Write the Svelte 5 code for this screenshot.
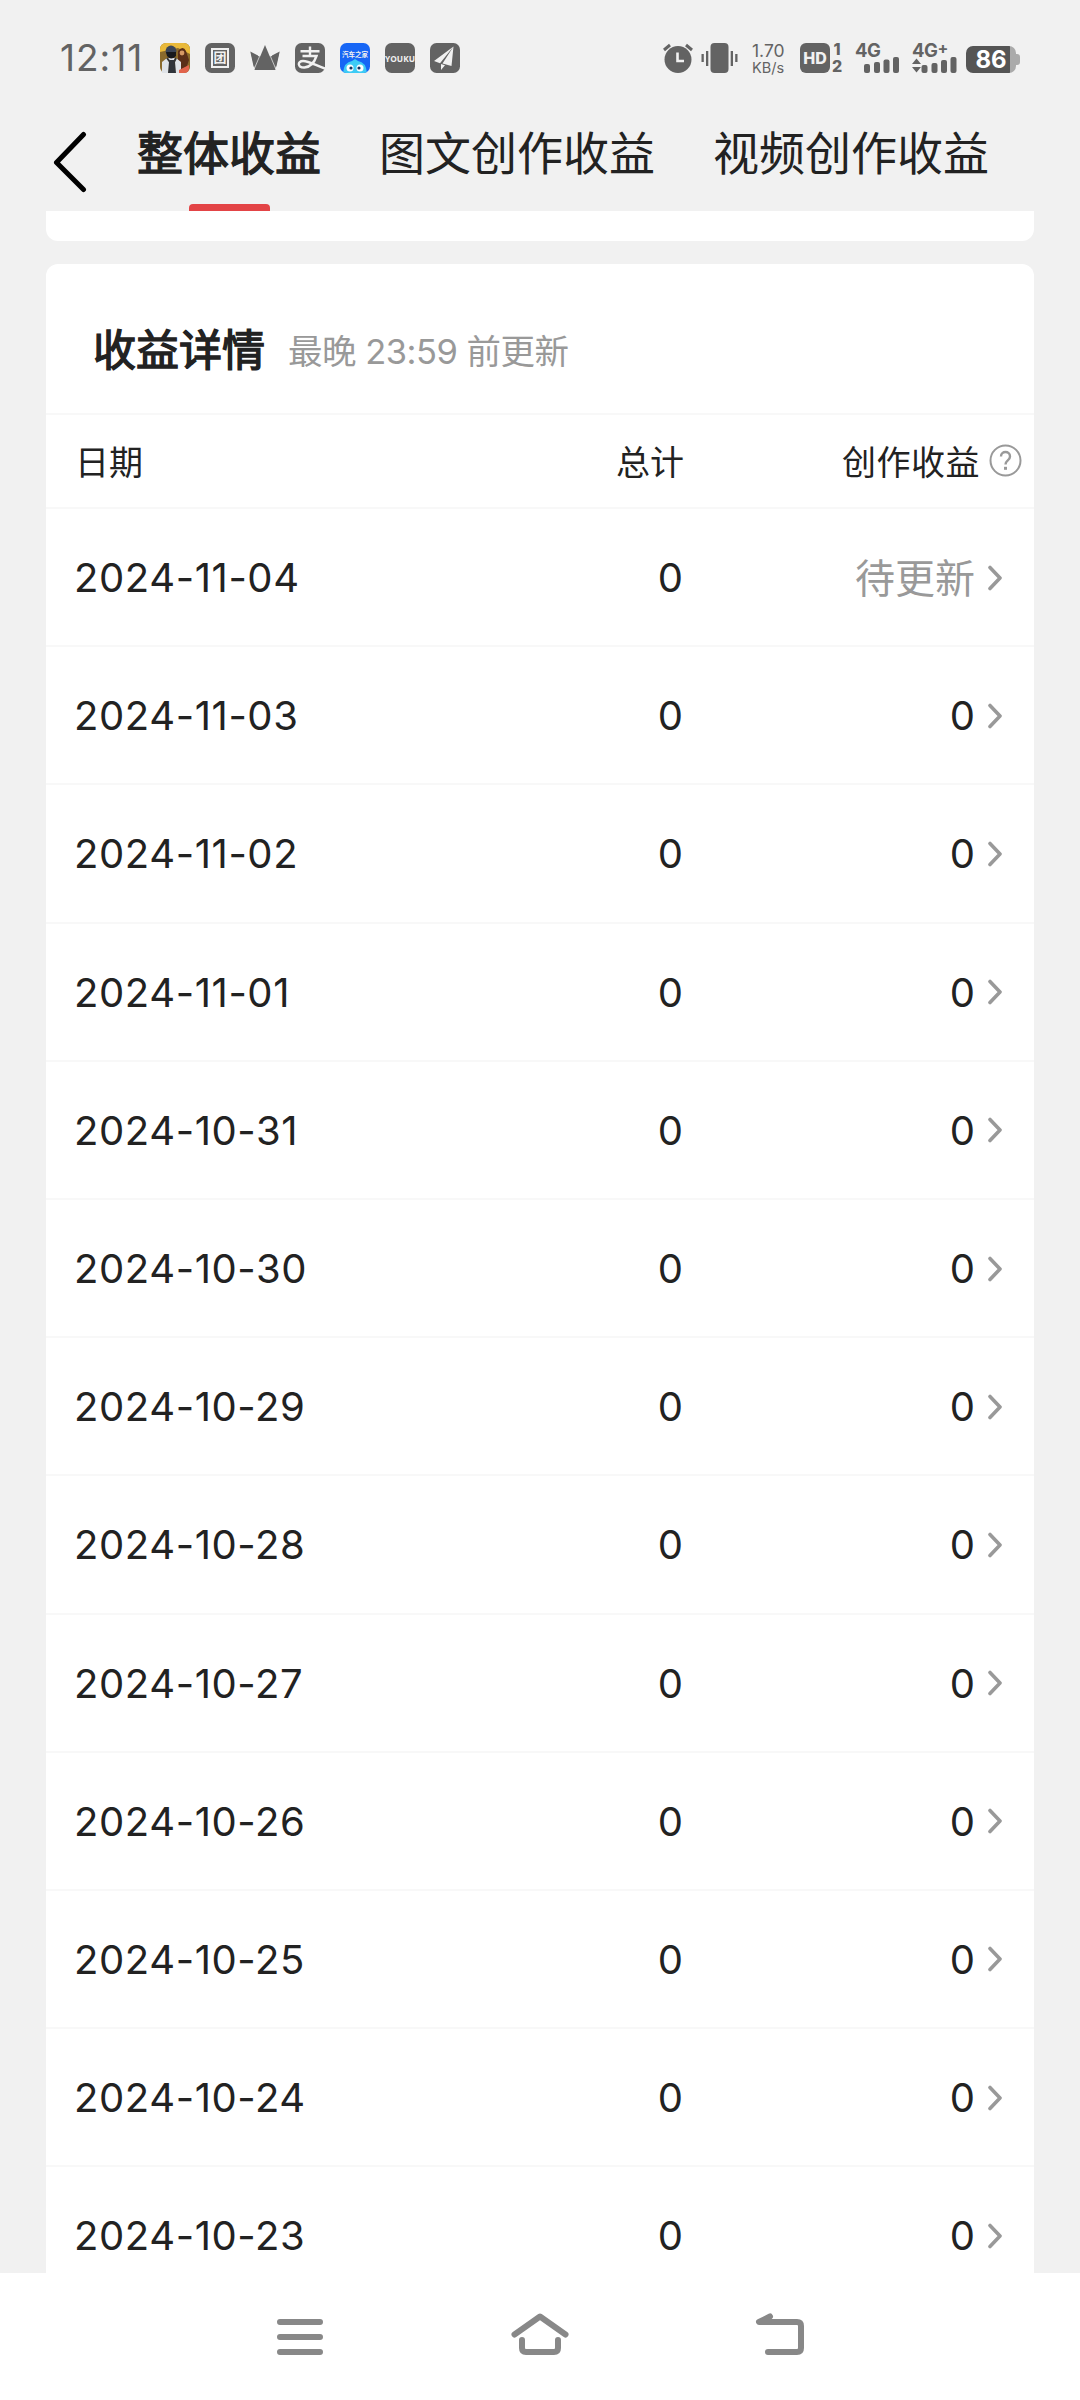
<script>
    let tabs = ["整体收益", "图文创作收益", "视频创作收益"]
    let active = 0

    let rows = [
        {date: "2024-11-04", total: "0", income: "待更新", pending: true},
        {date: "2024-11-03", total: "0", income: "0"},
        {date: "2024-11-02", total: "0", income: "0"},
        {date: "2024-11-01", total: "0", income: "0"},
        {date: "2024-10-31", total: "0", income: "0"},
        {date: "2024-10-30", total: "0", income: "0"},
        {date: "2024-10-29", total: "0", income: "0"},
        {date: "2024-10-28", total: "0", income: "0"},
        {date: "2024-10-27", total: "0", income: "0"},
        {date: "2024-10-26", total: "0", income: "0"},
        {date: "2024-10-25", total: "0", income: "0"},
        {date: "2024-10-24", total: "0", income: "0"},
        {date: "2024-10-23", total: "0", income: "0"}
    ]
</script>

<main class="screen">
    <div class="statusbar">
        <span class="clock">12:11</span>
        <div class="apps">
            <!-- game -->
            <svg width="30" height="30" viewBox="0 0 30 30">
                <rect width="30" height="30" rx="6" fill="#8a6a2c"/>
                <path d="M6 0h18a6 6 0 0 1 6 6v5L18 5 0 9V6a6 6 0 0 1 6-6z" fill="#e9b93a"/>
                <path d="M18 8q5-6 8 0l3 9-3 9h-8z" fill="#5b2f18"/>
                <circle cx="22" cy="10" r="2.4" fill="#d79a66"/>
                <path d="M2 30V19l5-4h9l5 4v11z" fill="#dfe3e8"/>
                <path d="M7 15l3 4-1 11M16 15l-2 4 1 11" stroke="#333" stroke-width="2" fill="none"/>
                <path d="M10 17h4l1 13H9z" fill="#30343b"/>
                <circle cx="11" cy="8" r="5.4" fill="#3b4557"/>
                <path d="M6 9h10v4q-5 5-9 0z" fill="#17191d"/>
                <path d="M19 27l10-5v3q0 5-5 5h-5z" fill="#e2644c"/>
            </svg>
            <span class="app"><span class="frame">团</span></span>
            <!-- crown -->
            <svg width="30" height="30" viewBox="0 0 30 30" fill="#636363">
                <path d="M15 2l10.500 25h-21z"/>
                <path d="M.3 8.500l7.700 4L3.700 24zM29.700 8.500l-7.700 4L26.300 24z"/>
                <path d="M1 10l4 17h3l3-13-3-1zM29 10l-4 17h-3l-3-13 3-1z"/>
                <path d="M9.500 13.500L4.200 26M20.500 13.500l5.300 12.500" stroke="#f1f1f1" stroke-width=".7"/>
            </svg>
            <!-- pay -->
            <svg width="30" height="30" viewBox="0 0 30 30">
                <rect width="30" height="30" rx="6.500" fill="#636363"/>
                <g fill="none" stroke="#f1f1f1" stroke-width="2.400">
                    <path d="M5.500 8.200h19M15 3.500v9.500M7.500 13h14c-2 6-6 11-12 11.500-7 .3-7.500-6.500-1.500-6.500 6 0 13 4.500 22 7.500"/>
                </g>
            </svg>
            <!-- car app -->
            <span class="app blue">
                <span class="blue-text">汽车之家</span>
                <svg width="30" height="14" viewBox="0 0 30 14">
                    <path d="M3 14Q4 3 12 2l3-2 3 2q8 1 9 12z" fill="#3ecbf5"/>
                    <circle cx="10" cy="9" r="3.500" fill="#fff"/>
                    <circle cx="20" cy="9" r="3.500" fill="#fff"/>
                    <circle cx="11" cy="9" r="1.600" fill="#12335e"/>
                    <circle cx="19" cy="9" r="1.600" fill="#12335e"/>
                </svg>
            </span>
            <span class="app youku">YOUKU</span>
            <!-- paper plane -->
            <svg width="30" height="30" viewBox="0 0 30 30">
                <rect width="30" height="30" rx="6.500" fill="#636363"/>
                <path d="M23.500 3.500L4 18l6 2.200zM23.500 3.500L12.500 20.500l9 2.500zM11 21v6l4-4.700z" fill="#f1f1f1"/>
            </svg>
        </div>
        <div class="system">
            <!-- alarm -->
            <svg class="alarm" width="30" height="30" viewBox="0 0 30 30">
                <circle cx="15" cy="16.500" r="13.500" fill="#636363"/>
                <path d="M1 7l6-5M29 7l-6-5" stroke="#636363" stroke-width="3"/>
                <path d="M14.500 9.500V18H21" stroke="#f1f1f1" stroke-width="2.600" fill="none"/>
            </svg>
            <!-- vibrate -->
            <svg class="vibrate" width="37" height="30" viewBox="0 0 37 30" fill="#636363">
                <rect x="9.500" width="18" height="30" rx="4"/>
                <rect x="5" y="8" width="2.300" height="15"/>
                <rect x=".5" y="11" width="2.300" height="8"/>
                <rect x="29.700" y="8" width="2.300" height="15"/>
                <rect x="34.200" y="11" width="2.300" height="8"/>
            </svg>
            <div class="speed"><span>1.70</span><span class="unit">KB/s</span></div>
            <span class="hd">HD</span>
            <div class="sims"><span>1</span><span>2</span></div>
            <div class="signal first">
                <span>4G</span>
                <svg width="36" height="16" viewBox="0 0 36 16" fill="#636363">
                    <rect x="0" y="7" width="6" height="9" rx="2"/>
                    <rect x="10" y="5" width="6" height="11" rx="2"/>
                    <rect x="19.500" y="2.500" width="6" height="13.500" rx="2"/>
                    <rect x="29" y="0" width="6" height="16" rx="2"/>
                </svg>
            </div>
            <div class="signal">
                <span>4G<sup>+</sup></span>
                <svg width="45" height="16" viewBox="0 0 45 16" fill="#636363">
                    <path d="M0 7l4.500-5.500L9 7zM0 10h9l-4.500 5.500z"/>
                    <rect x="9.500" y="8" width="6" height="8" rx="2"/>
                    <rect x="19.500" y="6" width="6" height="10" rx="2"/>
                    <rect x="29" y="3" width="6" height="13" rx="2"/>
                    <rect x="38.500" y="0" width="6" height="16" rx="2"/>
                </svg>
            </div>
            <div class="battery">86</div>
        </div>
    </div>

    <nav class="tabs">
        <svg class="back" width="34" height="62" viewBox="0 0 34 62">
            <path d="M30.500 3.500L3.500 31.500l27 27" fill="none" stroke="#000" stroke-width="5" stroke-linecap="round" stroke-linejoin="round"/>
        </svg>
        {#each tabs as tab, i}
            <button class="tab" class:active={i === active} on:click={() => active = i}>{tab}</button>
        {/each}
    </nav>

    <div class="content">
        <section class="card previous"></section>
        <section class="card">
            <header>
                <h2>收益详情</h2>
                <span class="hint">最晚 23:59 前更新</span>
            </header>
            <div class="row head">
                <span>日期</span>
                <span class="total">总计</span>
                <span class="income">
                    创作收益
                    <svg width="33" height="33" viewBox="0 0 33 33" fill="none" stroke="#999" stroke-width="2">
                        <circle cx="16.500" cy="16.500" r="15"/>
                        <path d="M12 12.500c0-6 9-6 9 0 0 4-4.500 3.800-4.500 8" stroke-width="2.400"/>
                        <path d="M16.500 22.800v3" stroke-width="3"/>
                    </svg>
                </span>
            </div>
            {#each rows as row}
                <div class="row">
                    <span class="date">{row.date}</span>
                    <span class="total">{row.total}</span>
                    <span class="income" class:pending={row.pending}>
                        <span>{row.income}</span>
                        <svg width="16" height="26" viewBox="0 0 16 26">
                            <path d="M3 2.500L13 13 3 23.500" fill="none" stroke="#999" stroke-width="3.600" stroke-linecap="round" stroke-linejoin="round"/>
                        </svg>
                    </span>
                </div>
            {/each}
        </section>
    </div>

    <footer class="navbar">
        <svg width="60" height="48" viewBox="0 0 60 48">
            <path d="M10 9h40M10 24h40M10 39h40"/>
        </svg>
        <svg width="60" height="48" viewBox="0 0 60 48">
            <path d="M4.500 21.500L30 3.500l25.500 18M12 27v8q0 4 4 4h28q4 0 4-4v-8"/>
        </svg>
        <svg width="60" height="48" viewBox="0 0 60 48">
            <path d="M20 3.500L9 9h38q4 0 4 4v22q0 4-4 4H18"/>
        </svg>
    </footer>
</main>

<style>
:global(body) {
    margin: 0;
    background: #f1f1f1;
}

.screen {
    display: flex;
    flex-direction: column;
    box-sizing: border-box;
    width: 1080px;
    height: 2400px;
    overflow: hidden;
    background: #f1f1f1;
    color: #222;
    font-family: Inter, "Noto Sans CJK SC", sans-serif;
}

.statusbar {
    display: flex;
    align-items: center;
    flex: none;
    height: 116px;
    padding: 0 61px 0 60px;
    color: #636363;
}

.statusbar svg {
    display: block;
}

.clock {
    width: 100px;
    font-size: 37px;
    line-height: 40px;
    letter-spacing: 1px;
}

.apps {
    display: flex;
    gap: 15px;
}

.app {
    display: flex;
    align-items: center;
    justify-content: center;
    width: 30px;
    height: 30px;
    border-radius: 6.5px;
    background: #636363;
    color: #f1f1f1;
    overflow: hidden;
}

.frame {
    width: 14px;
    height: 16px;
    border: 2px solid #f1f1f1;
    font-size: 13px;
    line-height: 15px;
    font-weight: bold;
    text-align: center;
}

.blue {
    flex-direction: column;
    justify-content: flex-end;
    background: #1766f5;
}

.blue-text {
    font-size: 6.5px;
    line-height: 8px;
    font-weight: bold;
    white-space: nowrap;
}

.youku {
    font-family: "Open Sans", sans-serif;
    font-size: 8.3px;
    font-weight: bold;
}

.system {
    display: flex;
    align-items: center;
    height: 30px;
    margin-left: auto;
}

.vibrate {
    margin-left: 8px;
}

.speed {
    display: flex;
    flex-direction: column;
    width: 36px;
    margin: 0 12px 0 14px;
    font-size: 17.5px;
    line-height: 18px;
}

.speed span {
    white-space: nowrap;
}

.speed .unit {
    font-size: 14.5px;
    line-height: 15px;
}

.hd {
    width: 30px;
    height: 30px;
    border-radius: 6px;
    background: #636363;
    color: #f1f1f1;
    font-size: 16px;
    line-height: 30px;
    font-weight: 800;
    text-align: center;
}

.sims {
    display: flex;
    flex-direction: column;
    width: 12px;
    margin: 0 12px 0 1px;
    font-size: 16px;
    line-height: 17px;
    font-weight: 800;
    text-align: center;
}

.signal {
    display: flex;
    flex-direction: column;
    align-items: flex-start;
    justify-content: space-between;
    width: 45px;
    height: 30px;
    margin-right: 9px;
    font-size: 18.5px;
    line-height: 15px;
    font-weight: 700;
    letter-spacing: -0.5px;
    white-space: nowrap;
}

.signal.first {
    align-items: flex-end;
    margin-right: 12px;
}

.signal.first span {
    align-self: flex-start;
}

.signal span {
    height: 14px;
}

.signal sup {
    font-size: 16px;
    line-height: 0;
    vertical-align: 3px;
}

.battery {
    position: relative;
    width: 50px;
    height: 27px;
    margin: 3px 3px 0 0;
    border-radius: 7px;
    background: linear-gradient(to right, #555 0 44px, #aaa 44px);
    color: #fff;
    font-size: 24px;
    line-height: 28px;
    font-weight: 700;
    text-align: center;
}

.battery::after {
    content: "";
    position: absolute;
    left: 50px;
    top: 8px;
    width: 4px;
    height: 11px;
    border-radius: 0 3px 3px 0;
    background: #aaa;
}

.tabs {
    display: flex;
    flex: none;
    height: 95px;
    padding-left: 53px;
}

.back {
    flex: none;
    margin: 15px 50px 0 0;
}

.tab {
    display: flex;
    flex-direction: column;
    align-items: center;
    justify-content: space-between;
    margin: 0 58px 0 0;
    padding: 1px 0 0;
    border: none;
    background: none;
    color: #222;
    font: 46px/66px "Noto Sans CJK SC", sans-serif;
    white-space: nowrap;
}

.tab.active {
    -webkit-text-stroke: 1.3px #222;
}

.tab.active::after {
    content: "";
    width: 81px;
    height: 7px;
    border-radius: 4px 4px 0 0;
    background: #e34446;
}

.content {
    display: flex;
    flex-direction: column;
    flex: 1;
    gap: 23px;
    min-height: 0;
    padding: 0 46px;
    overflow: hidden;
}

.card {
    flex: none;
    border-radius: 12px;
    background: #fff;
}

.previous {
    height: 30px;
    border-radius: 0 0 12px 12px;
}

.card header {
    display: flex;
    align-items: center;
    height: 149px;
    padding: 0 47px;
}

h2 {
    margin: 23px 23px 0 0;
    font-size: 43px;
    line-height: 60px;
    font-weight: normal;
    -webkit-text-stroke: 1.4px #222;
}

.hint {
    margin-top: 27px;
    color: #999;
    font-size: 34.5px;
    line-height: 50px;
    letter-spacing: -0.5px;
}

.row {
    display: grid;
    grid-template-columns: 300px 309px 1fr;
    align-items: center;
    box-sizing: border-box;
    height: 138.2px;
    padding: 1px 31px 0 28px;
    border-top: 2px solid #f8f8f8;
    font-size: 40px;
}

.row.head {
    height: 94px;
    padding: 0 12px 2px 29px;
    font-size: 34px;
}

.date {
    letter-spacing: 0.6px;
}

.total {
    text-align: right;
}

.income {
    display: flex;
    align-items: center;
    justify-content: flex-end;
    gap: 12px;
}

.head .income {
    gap: 9px;
    letter-spacing: 0.5px;
}

.pending {
    color: #999;
}

.pending span {
    margin-top: -4px;
}

.navbar {
    display: flex;
    align-items: center;
    justify-content: center;
    gap: 180px;
    flex: none;
    height: 127px;
    background: #fff;
}

.navbar svg {
    fill: none;
    stroke: #888;
    stroke-width: 6;
    stroke-linecap: round;
    stroke-linejoin: round;
}
</style>
